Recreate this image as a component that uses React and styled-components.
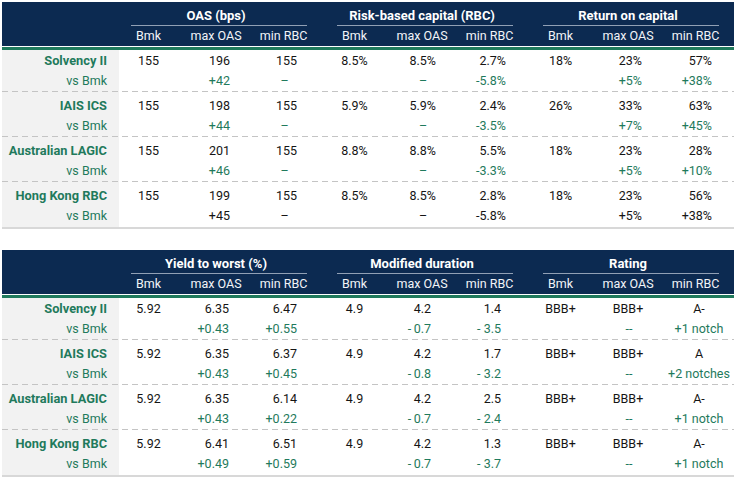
import React from 'react';
import styled, { createGlobalStyle } from 'styled-components';

const NAVY = '#0c2a51';
const GREEN = '#1f7a5c';

const GlobalStyle = createGlobalStyle`
  body {
    margin: 0;
    background: #fff;
    font-family: Roboto, "Liberation Sans", sans-serif;
    font-size: 12.5px;
    color: #151515;
  }
`;

const COLS = '117px 59px 76px 59px 12px 59px 76px 59px 12px 59px 76px 59px 9px';

const Page = styled.div`
  padding: 2px 0 0 2px;
  display: flex;
  flex-direction: column;
  gap: 21px;
`;

const Table = styled.div`
  width: 732px;
`;

const Header = styled.div`
  background: ${NAVY};
  height: 44px;
  display: grid;
  grid-template-columns: ${COLS};
  grid-template-rows: 24px 20px;
  color: #fff;
`;

const GroupTitle = styled.div`
  grid-row: 1;
  grid-column: ${(p) => p.$start} / span 3;
  font-weight: 700;
  font-size: 13px;
  text-align: center;
  line-height: 19px;
  padding-top: 4px;
  margin: 0 6px 0 12px;
  border-bottom: 1px solid rgba(190, 200, 215, 0.75);
  box-sizing: border-box;
  height: 24px;
  text-indent: -6px;
`;

const SubHead = styled.div`
  grid-row: 2;
  grid-column: ${(p) => p.$col};
  text-align: center;
  line-height: 20px;
  color: #f2f4f8;
`;

const HeaderRule = styled.div`
  height: 3px;
  margin-top: 1px;
  background: ${GREEN};
`;

const Group = styled.div`
  padding-top: 4px;
  padding-bottom: 1px;
  background: linear-gradient(to right, #f2f2f2 117px, #fff 117px);
  position: relative;
  &:first-child {
    padding-top: 1px;
  }
  &:not(:last-child)::after {
    content: '';
    position: absolute;
    left: 0;
    right: 0;
    bottom: 0;
    height: 1px;
    background: repeating-linear-gradient(90deg, #c4c4c4 0 6px, transparent 6px 10px);
  }
  &:last-child {
    border-bottom: 2px solid #d8d8d8;
  }
`;

const Row = styled.div`
  display: grid;
  grid-template-columns: ${COLS};
  line-height: 20px;
  height: 20px;
`;

const Label = styled.div`
  grid-column: 1;
  text-align: right;
  padding-right: 12px;
  color: ${GREEN};
  font-weight: ${(p) => (p.$bold ? 700 : 400)};
  font-size: ${(p) => (p.$bold ? '12.8px' : '12.5px')};
`;

const JUSTIFY = { center: 'center', right: 'flex-end', left: 'flex-start' };

const Cell = styled.div`
  grid-column: ${(p) => p.$col};
  display: flex;
  justify-content: ${(p) => JUSTIFY[p.$align]};
  padding-right: ${(p) => p.$pr || 0}px;
  padding-left: ${(p) => p.$pl || 0}px;
  color: ${(p) => (p.$green ? GREEN : '#151515')};
  white-space: nowrap;
  min-width: 0;
`;

const colIndex = (i) => 2 + i + Math.floor(i / 3);
const SUBS = ['Bmk', 'max OAS', 'min RBC'];

const isDash = (v) => v === '–' || v === '--';

const DataTable = ({ titles, cols, rows, blackLast }) => (
  <Table>
    <Header>
      {titles.map((t, g) => (
        <GroupTitle key={t} $start={colIndex(g * 3)}>{t}</GroupTitle>
      ))}
      {titles.map((t, g) =>
        SUBS.map((s, k) => (
          <SubHead key={t + s} $col={colIndex(g * 3 + k)}>{s}</SubHead>
        ))
      )}
    </Header>
    <HeaderRule />
    <div>
      {rows.map((r, ri) => {
        const black = blackLast && ri === rows.length - 1;
        return (
          <Group key={r.name}>
            <Row>
              <Label $bold>{r.name}</Label>
              {r.values.map((v, i) => (
                <Cell key={i} $col={colIndex(i)} $align={cols[i].a} $pr={cols[i].pr} $pl={cols[i].pl}>{v}</Cell>
              ))}
            </Row>
            <Row>
              <Label>vs Bmk</Label>
              {r.vs.map((v, i) => (
                <Cell
                  key={i}
                  $col={colIndex(i)}
                  $align={isDash(v) ? 'center' : cols[i].a}
                  $pr={isDash(v) ? 0 : cols[i].pr}
                  $pl={isDash(v) ? 2 : cols[i].pl}
                  $green={!black}
                >
                  {v}
                </Cell>
              ))}
            </Row>
          </Group>
        );
      })}
    </div>
  </Table>
);

const C = { a: 'center' };
const R = (pr) => ({ a: 'right', pr });

const capitalCols = [C, R(24), R(16), C, R(24), R(13), C, R(24), R(13)];
const yieldCols = [C, R(25), R(16), C, R(29), R(18), C, C, { a: 'center', pl: 7 }];

const capitalRows = [
  { name: 'Solvency II', values: ['155', '196', '155', '8.5%', '8.5%', '2.7%', '18%', '23%', '57%'], vs: ['', '+42', '–', '', '–', '-5.8%', '', '+5%', '+38%'] },
  { name: 'IAIS ICS', values: ['155', '198', '155', '5.9%', '5.9%', '2.4%', '26%', '33%', '63%'], vs: ['', '+44', '–', '', '–', '-3.5%', '', '+7%', '+45%'] },
  { name: 'Australian LAGIC', values: ['155', '201', '155', '8.8%', '8.8%', '5.5%', '18%', '23%', '28%'], vs: ['', '+46', '–', '', '–', '-3.3%', '', '+5%', '+10%'] },
  { name: 'Hong Kong RBC', values: ['155', '199', '155', '8.5%', '8.5%', '2.8%', '18%', '23%', '56%'], vs: ['', '+45', '–', '', '–', '-5.8%', '', '+5%', '+38%'] },
];

const yieldRows = [
  { name: 'Solvency II', values: ['5.92', '6.35', '6.47', '4.9', '4.2', '1.4', 'BBB+', 'BBB+', 'A-'], vs: ['', '+0.43', '+0.55', '', '-\u20090.7', '- 3.5', '', '--', '+1 notch'] },
  { name: 'IAIS ICS', values: ['5.92', '6.35', '6.37', '4.9', '4.2', '1.7', 'BBB+', 'BBB+', 'A'], vs: ['', '+0.43', '+0.45', '', '-\u20090.8', '- 3.2', '', '--', '+2 notches'] },
  { name: 'Australian LAGIC', values: ['5.92', '6.35', '6.14', '4.9', '4.2', '2.5', 'BBB+', 'BBB+', 'A-'], vs: ['', '+0.43', '+0.22', '', '-\u20090.7', '- 2.4', '', '--', '+1 notch'] },
  { name: 'Hong Kong RBC', values: ['5.92', '6.41', '6.51', '4.9', '4.2', '1.3', 'BBB+', 'BBB+', 'A-'], vs: ['', '+0.49', '+0.59', '', '-\u20090.7', '- 3.7', '', '--', '+1 notch'] },
];

const App = () => (
  <>
    <GlobalStyle />
    <Page>
      <DataTable
        titles={['OAS (bps)', 'Risk-based capital (RBC)', 'Return on capital']}
        cols={capitalCols}
        rows={capitalRows}
        blackLast
      />
      <DataTable
        titles={['Yield to worst (%)', 'Modified duration', 'Rating']}
        cols={yieldCols}
        rows={yieldRows}
      />
    </Page>
  </>
);

export default App;
